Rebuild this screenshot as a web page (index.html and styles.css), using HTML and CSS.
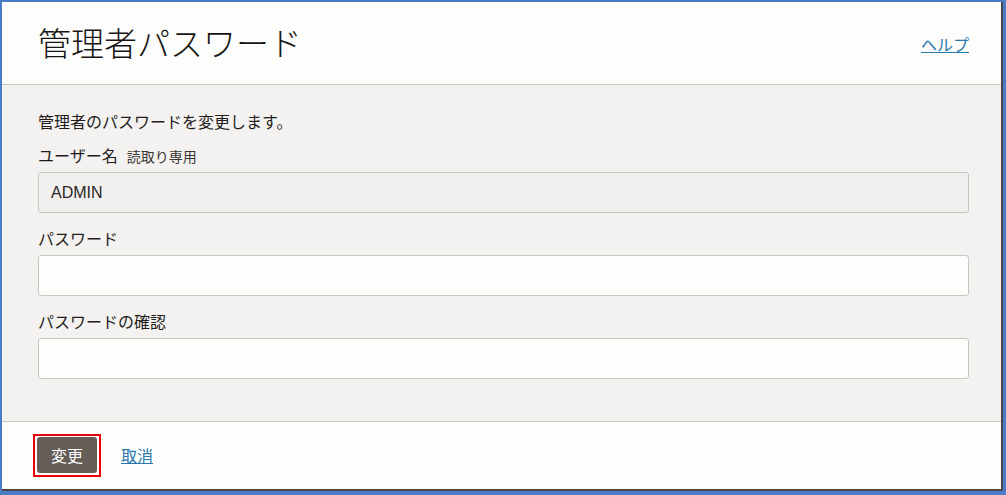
FILE: index.html
```html
<!DOCTYPE html>
<html lang="ja">
<head>
<meta charset="utf-8">
<title>管理者パスワード</title>
<link rel="stylesheet" href="styles.css">
</head>
<body>
<div class="dialog">
  <header class="dlg-header">
    <h1 class="dlg-title">管理者パスワード</h1>
    <a class="link help" href="#">ヘルプ</a>
  </header>
  <main class="dlg-body">
    <p class="desc">管理者のパスワードを変更します。</p>
    <div class="field">
      <label class="label">ユーザー名<span class="ro">読取り専用</span></label>
      <div class="input readonly">ADMIN</div>
    </div>
    <div class="field">
      <label class="label">パスワード</label>
      <div class="input"></div>
    </div>
    <div class="field">
      <label class="label">パスワードの確認</label>
      <div class="input"></div>
    </div>
  </main>
  <footer class="dlg-footer">
    <div class="highlight"><button class="btn-primary">変更</button></div>
    <a class="link cancel" href="#">取消</a>
  </footer>
</div>
</body>
</html>
```
FILE: styles.css
```css
* { box-sizing: border-box; }
html, body { margin: 0; padding: 0; }
body {
  background: #4a7cc8;
  font-family: "Noto Sans CJK JP", "Noto Sans", sans-serif;
  color: #1f1c1a;
  width: 1006px;
  height: 495px;
  overflow: hidden;
}
.dialog {
  margin: 2px 3px 0 2px;
  height: 489px;
  background: #fdfdfc;
  border-right: 2px solid #4b4744;
  border-bottom: 2px solid #4b4744;
  display: flex;
  flex-direction: column;
}
.dlg-header {
  height: 83px;
  flex: none;
  display: flex;
  align-items: center;
  justify-content: space-between;
  padding: 0 32px 0 36px;
  border-bottom: 1px solid #cbc7c3;
  background: #fdfdfc;
}
.dlg-title {
  margin: 0;
  font-size: 33px;
  font-weight: 300;
  line-height: 40px;
  color: #161513;
  padding-bottom: 2px;
}
.link {
  color: #2b78ad;
  text-decoration: underline;
  font-size: 16px;
  line-height: 20px;
}
.help { margin-top: 2px; }
.dlg-body {
  flex: none;
  height: 337px;
  background: #f3f2f1;
  border-bottom: 1px solid #cbc7c3;
  padding: 26px 32px 0 36px;
}
.desc {
  margin: 0 0 14px;
  font-size: 16px;
  line-height: 20px;
  color: #1f1c1a;
}
.field { margin-bottom: 15px; }
.label {
  display: block;
  font-size: 16px;
  line-height: 20px;
  margin-bottom: 6px;
  color: #1f1c1a;
}
.field + .field .label { margin-bottom: 7px; }
.ro {
  font-size: 14px;
  margin-left: 9px;
  color: #3a3633;
}
.input {
  height: 41px;
  border: 1px solid #c9c5c1;
  border-radius: 3px;
  background: #fdfdfc;
  padding: 0 12px;
  display: flex;
  align-items: center;
  font-family: "Liberation Sans", Arial, sans-serif;
  font-size: 16px;
  color: #2a2725;
}
.input.readonly { background: #f1f0ef; }
.dlg-footer {
  flex: 1;
  display: flex;
  align-items: center;
  padding: 0 0 0 31px;
  gap: 20px;
}
.highlight {
  border: 2px solid #e8000b;
  padding: 1px 2px 2px 2px;
  display: flex;
}
.btn-primary {
  width: 60px;
  height: 36px;
  border: none;
  border-radius: 3px;
  background: #655d57;
  color: #ffffff;
  font-family: "Noto Sans CJK JP", sans-serif;
  font-size: 16px;
  padding: 0;
}
.cancel { margin-top: -1px; }
```
